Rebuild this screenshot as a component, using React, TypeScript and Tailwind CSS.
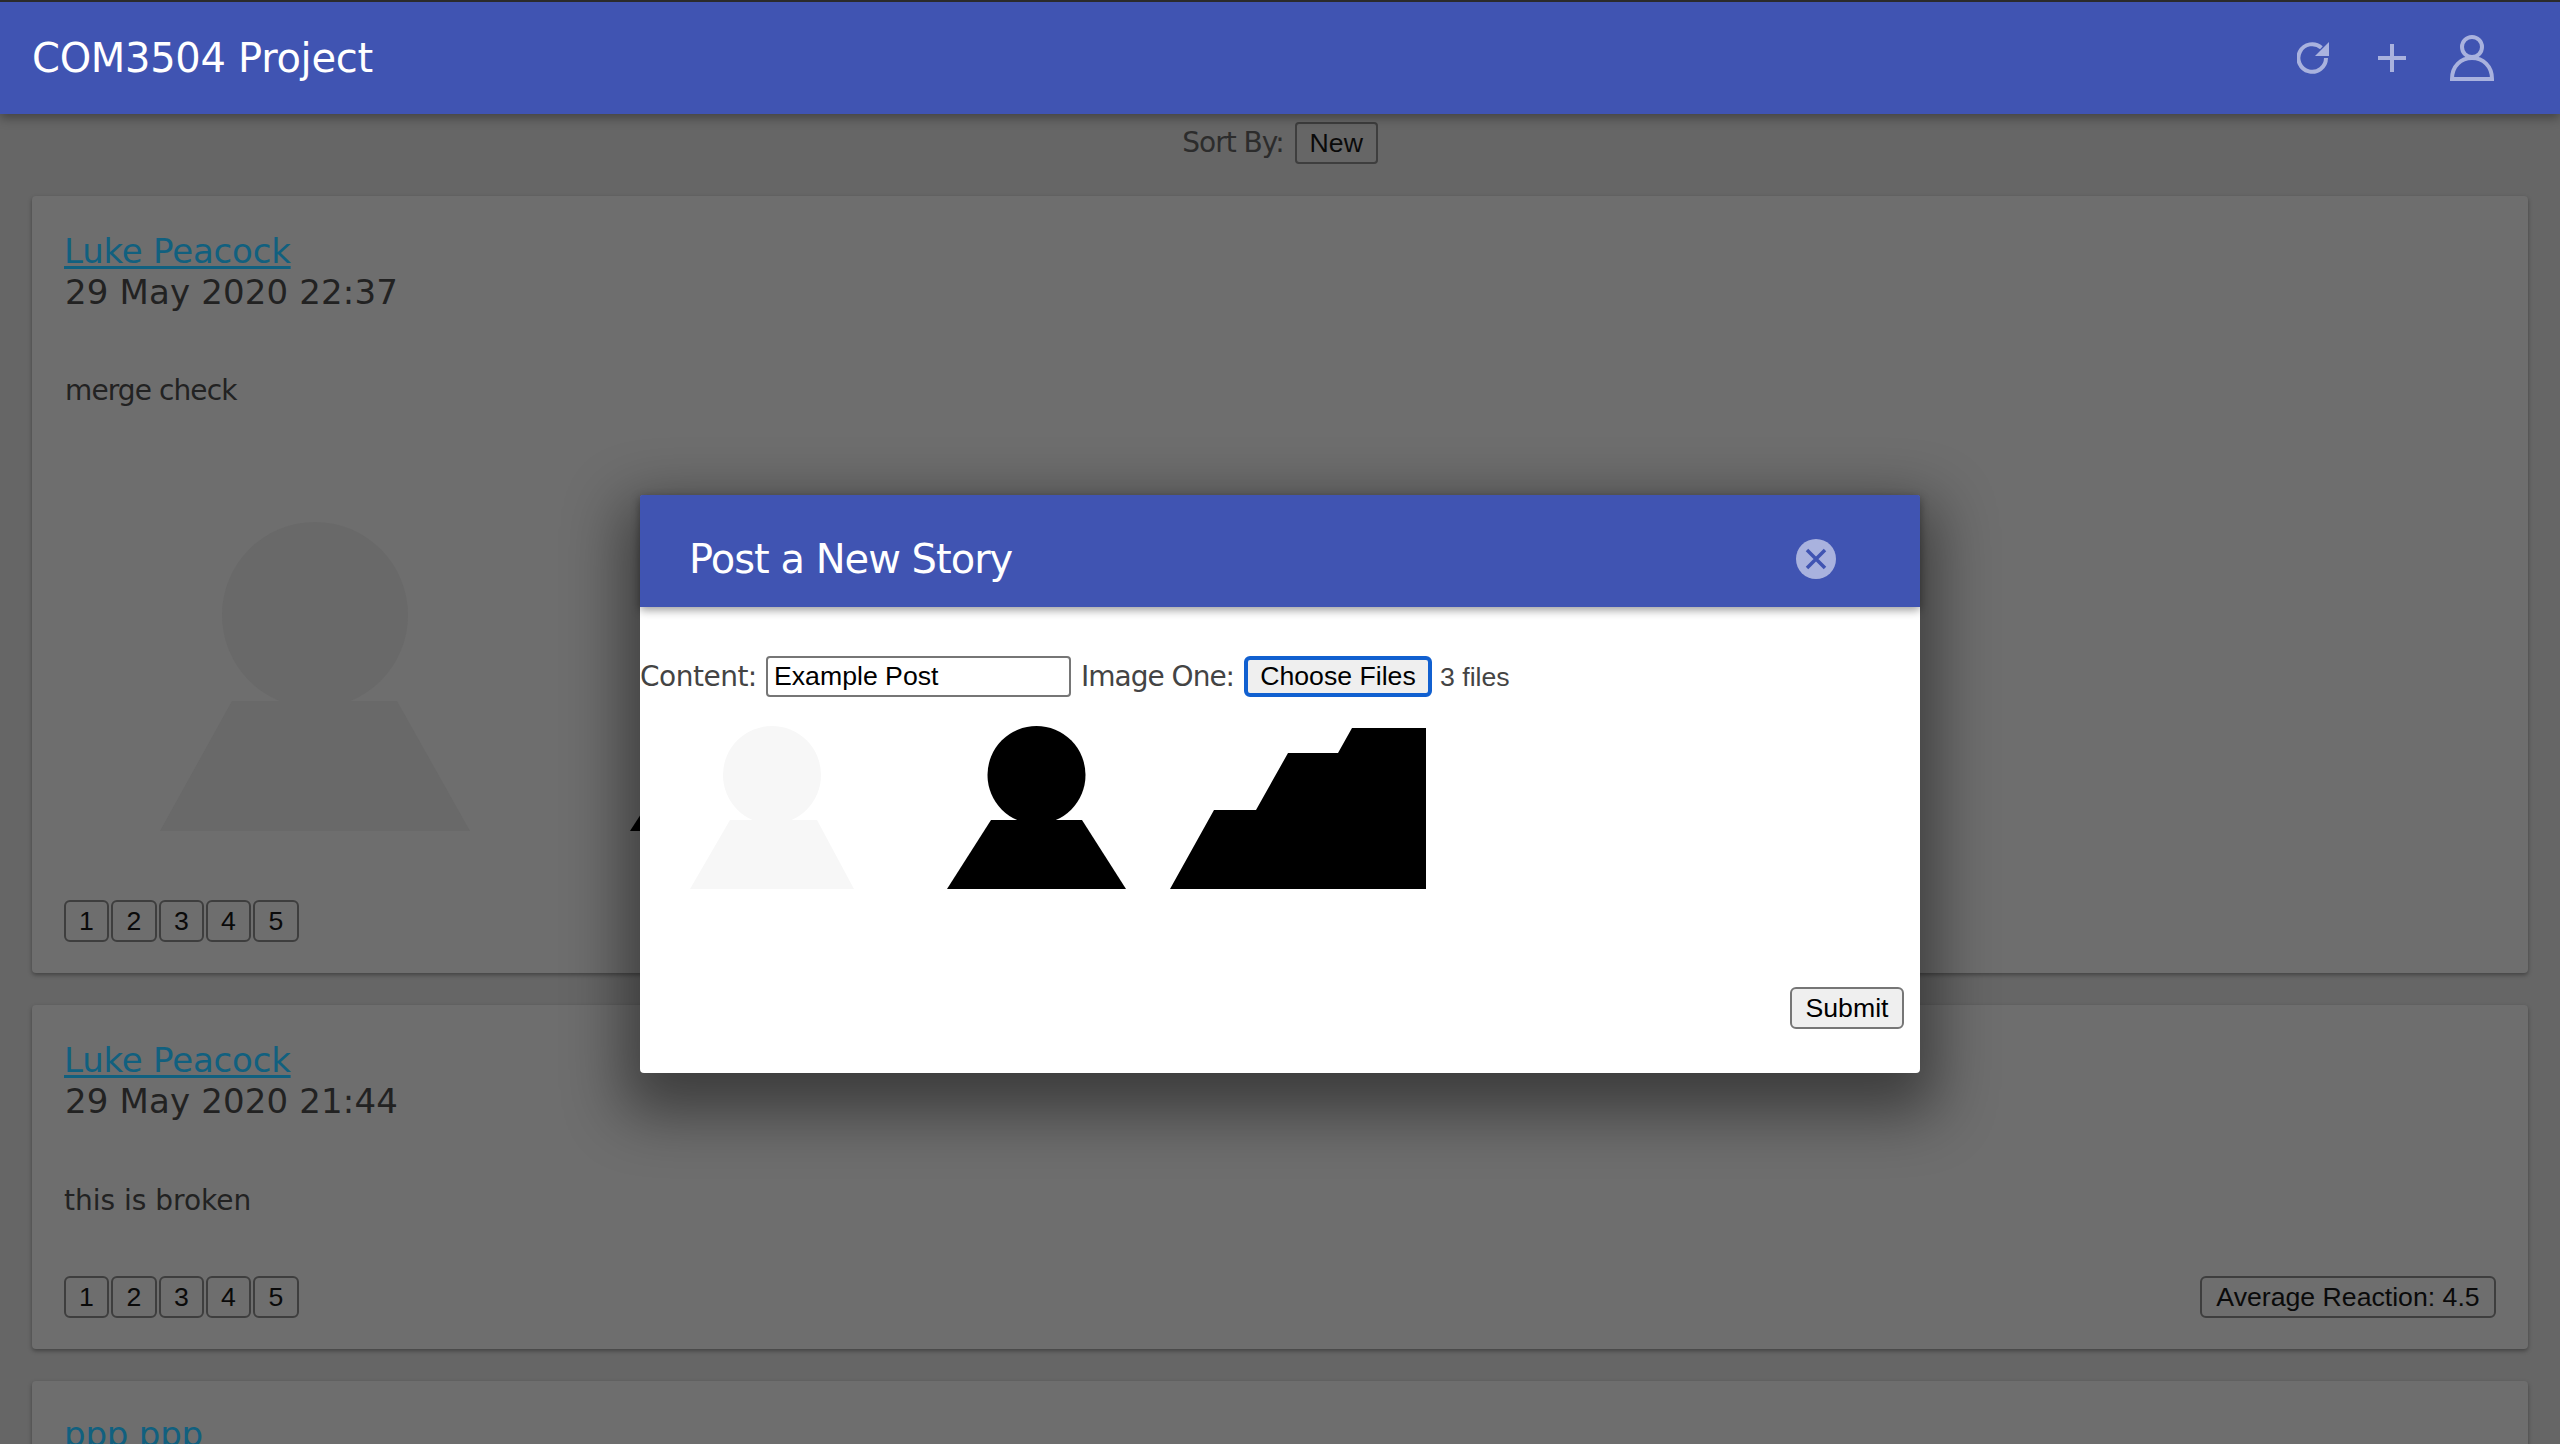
import React from 'react';

const uiFont = "font-['DejaVu_Sans',sans-serif]";
const btnFont = "font-['Liberation_Sans',Arial,sans-serif]";

interface PersonProps {
  width: number;
  height: number;
  radius: number;
  neckY: number;
  neckLeft: number;
  neckRight: number;
  fill: string;
  className?: string;
}

// placeholder avatar image used by the posts
const Person: React.FC<PersonProps> = ({ width, height, radius, neckY, neckLeft, neckRight, fill, className }) => (
  <svg width={width} height={height} viewBox={`0 0 ${width} ${height}`} className={`shrink-0 ${className ?? ''}`}>
    <circle cx={width / 2} cy={radius} r={radius} fill={fill} />
    <polygon points={`${neckLeft},${neckY} ${neckRight},${neckY} ${width},${height} 0,${height}`} fill={fill} />
  </svg>
);

const Steps: React.FC<{ width: number; height: number; className?: string }> = ({ width, height, className }) => (
  <svg width={width} height={height} viewBox="0 0 256 161" preserveAspectRatio="none" className={`shrink-0 ${className ?? ''}`}>
    <polygon points="0,161 44,82 86,82 118,25 168,25 182,0 256,0 256,161" fill="#000" />
  </svg>
);

const RateButtons = () => (
  <div className="flex gap-[2px]">
    {[1, 2, 3, 4, 5].map(n => (
      <button
        key={n}
        className={`h-[42px] ${n === 2 || n === 5 ? 'w-[46px]' : 'w-[45px]'} rounded-[6px] border-2 border-[#3e3e3e] text-[26.67px] leading-none text-[#0a0a0a] ${btnFont}`}
      >
        {n}
      </button>
    ))}
  </div>
);

const PostHead: React.FC<{ name: string; date?: string }> = ({ name, date }) => (
  <div className="flex flex-col">
    <a className="self-start text-[34px] leading-[40px] tracking-[-0.2px] text-[#11607f] underline underline-offset-[3px]">{name}</a>
    {date && <div className="mt-[1px] pl-[1px] text-[34px] leading-[40px] tracking-[0.15px] text-[#222]">{date}</div>}
  </div>
);

export default function App() {
  return (
    <div className={`relative h-[1444px] overflow-hidden bg-[#666] ${uiFont}`}>
      {/* top bar */}
      <header className="relative z-10 h-[114px] border-t-2 border-[#2b2b2b] bg-[#4054b2] shadow-[0_4px_10px_rgba(0,0,0,0.35)]">
        <div className="flex h-full items-center pl-[32px] pr-[66px]">
          <h1 className="text-[40px] leading-none tracking-[-0.3px] text-white">COM3504 Project</h1>
          <div className="ml-auto flex items-center">
            <svg width="34" height="34" viewBox="0 0 34 34" className="mr-[47px]">
              <path d="M29 17a13.8 13.8 0 1 1-4.6-10.3" fill="none" stroke="#a9b2de" strokeWidth="4" />
              <polygon points="32,1 32,15 18,15" fill="#a9b2de" />
            </svg>
            <svg width="28" height="28" viewBox="0 0 28 28" className="mr-[44px]">
              <path d="M14 0v28M0 14h28" stroke="#a9b2de" strokeWidth="4" />
            </svg>
            <svg width="44" height="46" viewBox="0 0 44 46">
              <circle cx="22" cy="12" r="10" fill="none" stroke="#a9b2de" strokeWidth="4" />
              <path d="M2 44c0-13 9-21 20-21s20 8 20 21z" fill="none" stroke="#a9b2de" strokeWidth="4" />
            </svg>
          </div>
        </div>
      </header>

      {/* sort */}
      <div className="flex h-[82px] items-start justify-center pt-[8px]">
        <span className="mr-[11px] mt-[5px] text-[28px] leading-[32px] tracking-[-1px] text-[#2c2c2c]">Sort By:</span>
        <button className={`h-[42px] w-[83px] rounded-[4px] border-2 border-[#3e3e3e] text-[26.67px] leading-none text-[#0a0a0a] ${btnFont}`}>New</button>
      </div>

      {/* posts */}
      <main className="flex flex-col gap-[32px] px-[32px]">
        <article className="h-[777px] rounded-[4px] bg-[#6e6e6e] px-[32px] pt-[35px] shadow-[0_2px_4px_rgba(0,0,0,0.35)]">
          <PostHead name="Luke Peacock" date="29 May 2020 22:37" />
          <p className="mt-[61px] pl-[1px] text-[28px] leading-[36px] tracking-[-0.9px] text-[#222]">merge check</p>
          <div className="mt-[113px] flex">
            <Person className="ml-[96px]" width={310} height={309} radius={93} neckY={179} neckLeft={72} neckRight={237} fill="#696969" />
            <Person className="ml-[160px]" width={340} height={309} radius={93} neckY={179} neckLeft={84} neckRight={256} fill="#000" />
          </div>
          <div className="mt-[69px]">
            <RateButtons />
          </div>
        </article>

        <article className="h-[344px] rounded-[4px] bg-[#6e6e6e] px-[32px] pt-[35px] shadow-[0_2px_4px_rgba(0,0,0,0.35)]">
          <PostHead name="Luke Peacock" date="29 May 2020 21:44" />
          <p className="mt-[62px] text-[28px] leading-[36px] text-[#222]">this is broken</p>
          <div className="mt-[57px] flex items-center justify-between">
            <RateButtons />
            <div className={`flex h-[42px] w-[296px] items-center justify-center rounded-[6px] border-2 border-[#3e3e3e] text-[26.67px] text-[#0a0a0a] ${btnFont}`}>
              Average Reaction: 4.5
            </div>
          </div>
        </article>

        <article className="h-[344px] rounded-[4px] bg-[#6e6e6e] px-[32px] pt-[33px] shadow-[0_2px_4px_rgba(0,0,0,0.35)]">
          <PostHead name="ppp ppp" />
        </article>
      </main>

      {/* new story dialog */}
      <div className="absolute inset-0 z-20 flex items-start justify-center pt-[495px]">
        <div className="flex h-[578px] w-[1280px] flex-col rounded-[4px] bg-white shadow-[0_24px_60px_16px_rgba(0,0,0,0.45)]">
          <div className="flex h-[112px] shrink-0 items-center rounded-t-[2px] bg-[#4054b2] pl-[49px] pr-[84px] pt-[16px] shadow-[0_3px_10px_rgba(0,0,0,0.4)]">
            <h2 className="text-[40px] leading-none tracking-[-1px] text-white">Post a New Story</h2>
            <svg width="40" height="40" viewBox="0 0 40 40" className="ml-auto">
              <circle cx="20" cy="20" r="20" fill="#a9b2de" />
              <path d="M11 11l18 18M29 11L11 29" stroke="#4054b2" strokeWidth="3.5" />
            </svg>
          </div>

          <form className="flex flex-1 flex-col">
            <div className="mt-[49px] flex h-[41px] items-center">
              <label className="w-[126px] whitespace-nowrap text-[28px] leading-none tracking-[-0.5px] text-[#444]">Content:</label>
              <input
                readOnly
                value="Example Post"
                className={`h-[41px] w-[305px] rounded-[4px] border-2 border-[#767676] px-[6px] text-[26.67px] text-black outline-none ${btnFont}`}
              />
              <label className="ml-[10px] w-[163px] whitespace-nowrap text-[28px] leading-none tracking-[-1px] text-[#444]">Image One:</label>
              <button type="button" className={`h-[41px] w-[188px] rounded-[6px] border-[4px] border-[#1160d0] bg-[#efefef] text-[26.67px] leading-none text-black ${btnFont}`}>
                Choose Files
              </button>
              <span className={`ml-[8px] text-[26.67px] text-[#444] ${btnFont}`}>3 files</span>
            </div>

            <div className="mt-[29px] flex items-end">
              <Person className="ml-[50px]" width={164} height={163} radius={49} neckY={94} neckLeft={40} neckRight={127} fill="#f7f7f7" />
              <Person className="ml-[93px]" width={179} height={163} radius={49} neckY={94} neckLeft={44} neckRight={135} fill="#000" />
              <Steps className="ml-[44px]" width={256} height={161} />
            </div>

            <div className="mr-[16px] mt-[98px] flex justify-end">
              <button type="button" className={`h-[42px] w-[114px] rounded-[6px] border-2 border-[#767676] bg-[#efefef] text-[26.67px] leading-none text-black ${btnFont}`}>
                Submit
              </button>
            </div>
          </form>
        </div>
      </div>
    </div>
  );
}
